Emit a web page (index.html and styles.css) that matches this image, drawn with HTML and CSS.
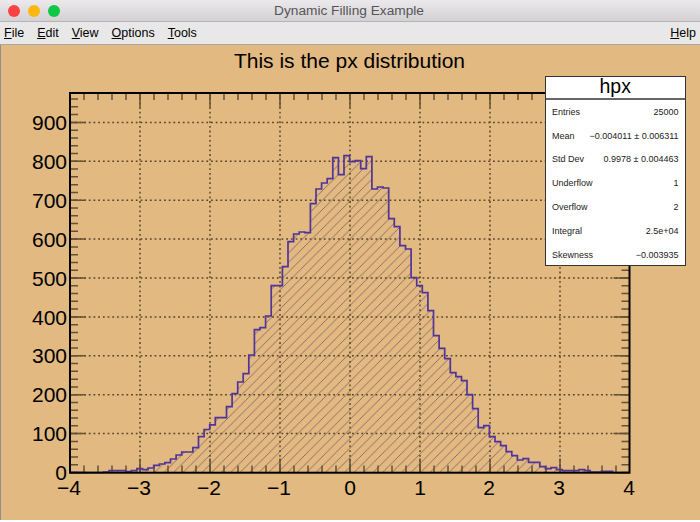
FILE: index.html
```html
<!DOCTYPE html>
<html lang="en">
<head>
<meta charset="utf-8">
<title>Dynamic Filling Example</title>
<link rel="stylesheet" href="styles.css">
</head>
<body>
<div class="window">
  <header class="titlebar">
    <div class="lights"><span class="light red"></span><span class="light yellow"></span><span class="light green"></span></div>
    <div class="wintitle">Dynamic Filling Example</div>
  </header>
  <nav class="menubar">
    <span class="item"><u>F</u>ile</span>
    <span class="item"><u>E</u>dit</span>
    <span class="item"><u>V</u>iew</span>
    <span class="item"><u>O</u>ptions</span>
    <span class="item"><u>T</u>ools</span>
    <span class="item help"><u>H</u>elp</span>
  </nav>
  <main class="canvas">
    <svg class="plot" viewBox="0 45 700 475" width="700" height="475" xmlns="http://www.w3.org/2000/svg">
      <defs>
        <pattern id="hatch" patternUnits="userSpaceOnUse" width="9.5" height="9.5">
          <path class="hatchline" d="M-1 10.5L10.5 -1M-1 1L1 -1M8.5 10.5L10.5 8.5"/>
        </pattern>
      </defs>
      <text class="title" x="349.5" y="68">This is the px distribution</text>
      <path class="histfill" d="M103.4 472.7V472H109V470.7H125.8V471.7H131.3V470.7H136.9V468.7H142.5V469.7H148.1V468H153.7V465.3H159.3V464H164.9V462.7H170.5V459H176.1V455H181.7V452H192.9V447.7H198.5V436.7H204.1V429.5H209.7V424.8H215.3V417.7H226.5V406.7H232.1V393.7H237.7V382H243.2V373.7H248.8V355H254.4V329.7H260V327.7H265.6V316H271.2V285.7H282.4V266.7H288V241.7H293.6V234H299.2V232H304.8V232.7H310.4V203.7H316V189H321.6V183H327.2V178.7H332.8V157.7H338.4V174.7H344V155.7H349.6V161.7H355.1V160.7H360.7V168.7H366.3V156.7H371.9V189H377.5V187H383.1V188H388.7V218.7H394.3V226.7H399.9V245.7H405.5V249H411.1V277.7H416.7V285.7H422.3V292.7H427.9V310.7H433.5V335.7H439.1V348.3H444.7V358.7H450.3V372.7H455.9V376.7H461.5V380.7H467V394.7H472.6V408.7H478.2V427.7H483.8V425.7H489.4V436.7H495V441.7H500.6V445.7H506.2V451.7H511.8V455.7H517.4V460H523V458.7H528.6V462.3H539.8V466.7H545.4V468.7H551V467.7H556.6V469.7H562.2V470.7H579V469.7H584.6V470.7H590.2V472H601.4V471.3H612.6V472.7Z"/>
      <g class="grid">
        <path d="M140 93V472M210 93V472M280 93V472M350 93V472M420 93V472M490 93V472M560 93V472"/>
        <path d="M70 122.4H630M70 161.3H630M70 200.2H630M70 239.1H630M70 278H630M70 316.9H630M70 355.8H630M70 394.7H630M70 433.6H630"/>
      </g>
      <g class="ticks">
        <line class="xminor" x1="69.25" y1="469" x2="630" y2="469"/>
        <line class="xminor" x1="69.25" y1="96.5" x2="630" y2="96.5"/>
        <line class="xmajor" x1="69.25" y1="465.5" x2="630" y2="465.5"/>
        <line class="xmajor" x1="69.25" y1="100" x2="630" y2="100"/>
        <line class="yminor" x1="74" y1="473.25" x2="74" y2="93"/>
        <line class="yminor" x1="625.5" y1="473.25" x2="625.5" y2="93"/>
        <line class="ymajor" x1="78" y1="473.25" x2="78" y2="93"/>
        <line class="ymajor" x1="621.5" y1="473.25" x2="621.5" y2="93"/>
      </g>
      <path class="histline" d="M70 472.5H103.4V472H109V470.7H125.8V471.7H131.3V470.7H136.9V468.7H142.5V469.7H148.1V468H153.7V465.3H159.3V464H164.9V462.7H170.5V459H176.1V455H181.7V452H192.9V447.7H198.5V436.7H204.1V429.5H209.7V424.8H215.3V417.7H226.5V406.7H232.1V393.7H237.7V382H243.2V373.7H248.8V355H254.4V329.7H260V327.7H265.6V316H271.2V285.7H282.4V266.7H288V241.7H293.6V234H299.2V232H304.8V232.7H310.4V203.7H316V189H321.6V183H327.2V178.7H332.8V157.7H338.4V174.7H344V155.7H349.6V161.7H355.1V160.7H360.7V168.7H366.3V156.7H371.9V189H377.5V187H383.1V188H388.7V218.7H394.3V226.7H399.9V245.7H405.5V249H411.1V277.7H416.7V285.7H422.3V292.7H427.9V310.7H433.5V335.7H439.1V348.3H444.7V358.7H450.3V372.7H455.9V376.7H461.5V380.7H467V394.7H472.6V408.7H478.2V427.7H483.8V425.7H489.4V436.7H495V441.7H500.6V445.7H506.2V451.7H511.8V455.7H517.4V460H523V458.7H528.6V462.3H539.8V466.7H545.4V468.7H551V467.7H556.6V469.7H562.2V470.7H579V469.7H584.6V470.7H590.2V472H601.4V471.3H612.6V472.5"/>
      <rect class="frame" x="70" y="93" width="559.5" height="379.7"/>
      <g class="ylabels">
        <text x="67" y="129.5">900</text>
        <text x="67" y="168.5">800</text>
        <text x="67" y="207.5">700</text>
        <text x="67" y="246.5">600</text>
        <text x="67" y="285.5">500</text>
        <text x="67" y="324.5">400</text>
        <text x="67" y="363">300</text>
        <text x="67" y="402">200</text>
        <text x="67" y="441">100</text>
        <text x="67" y="480">0</text>
      </g>
      <g class="xlabels">
        <text x="69" y="494.5">−4</text>
        <text x="139" y="494.5">−3</text>
        <text x="209" y="494.5">−2</text>
        <text x="279" y="494.5">−1</text>
        <text x="350" y="494.5">0</text>
        <text x="420" y="494.5">1</text>
        <text x="489" y="494.5">2</text>
        <text x="559" y="494.5">3</text>
        <text x="629" y="494.5">4</text>
      </g>
    </svg>
    <aside class="stats">
      <div class="statshead">hpx</div>
      <div class="statsbody">
        <div class="row"><span>Entries</span><span>25000</span></div>
        <div class="row"><span>Mean</span><span>−0.004011 ± 0.006311</span></div>
        <div class="row"><span>Std Dev</span><span>0.9978 ± 0.004463</span></div>
        <div class="row"><span>Underflow</span><span>1</span></div>
        <div class="row"><span>Overflow</span><span>2</span></div>
        <div class="row"><span>Integral</span><span>2.5e+04</span></div>
        <div class="row"><span>Skewness</span><span>−0.003935</span></div>
      </div>
    </aside>
  </main>
</div>
</body>
</html>
```

FILE: styles.css
```css
* { box-sizing: border-box; }
html, body { margin: 0; padding: 0; background: #fff; }
body { width: 700px; height: 522px; overflow: hidden; font-family: "Liberation Sans", Arial, sans-serif; }
.window { display: flex; flex-direction: column; width: 700px; height: 520px; }

.titlebar {
  position: relative;
  display: flex;
  align-items: center;
  justify-content: center;
  flex: 0 0 22px;
  background: linear-gradient(#ebe9eb, #d3d1d3);
  border-bottom: 1px solid #b4b4b4;
}
.lights { position: absolute; left: 8px; top: 5px; display: flex; gap: 8px; }
.light { width: 12px; height: 12px; border-radius: 50%; }
.red { background: #fc4144; }
.yellow { background: #fdb80f; }
.green { background: #0fc845; }
.wintitle { font-size: 13.7px; color: #555; margin-left: -2px; }

.menubar {
  display: flex;
  align-items: center;
  flex: 0 0 23px;
  padding: 0 4px;
  gap: 13px;
  font-size: 12.5px;
  color: #000;
  background: #e8e8e8;
  border-bottom: 1px solid #a8a8a8;
}
.help { margin-left: auto; }

.canvas {
  position: relative;
  flex: 1;
  background: #e1b981;
  border-left: 1px solid #8f8f8f;
}
.plot { display: block; margin-left: -1px; }

.title { font-size: 21px; text-anchor: middle; fill: #000; }
.hatchline { stroke: #7d5a64; stroke-width: 0.8; fill: none; }
.histfill { fill: url(#hatch); stroke: none; }
.grid path { fill: none; stroke: #5a4629; stroke-width: 1.5; stroke-dasharray: 1.8 2.9; }
.ticks line { stroke: #665236; }
.xminor { stroke-width: 7; stroke-dasharray: 1.5 12.5; }
.xmajor { stroke-width: 14; stroke-dasharray: 1.5 68.5; }
.yminor { stroke-width: 8; stroke-dasharray: 1.5 6.28; }
.ymajor { stroke-width: 16; stroke-dasharray: 1.5 37.4; }
.histline { fill: none; stroke: #4f349b; stroke-width: 1.7; }
.frame { fill: none; stroke: #000; stroke-width: 2; }
.ylabels text { font-size: 21px; text-anchor: end; fill: #000; }
.xlabels text { font-size: 21px; text-anchor: middle; fill: #000; }

.stats {
  position: absolute;
  left: 544px;
  top: 31px;
  display: flex;
  flex-direction: column;
  width: 140.5px;
  height: 190px;
  background: #fff;
  border: 1.5px solid #333;
}
.statshead {
  flex: 0 0 23px;
  font-size: 19.5px;
  line-height: 19px;
  text-align: center;
  color: #000;
  border-bottom: 2px solid #666;
}
.statsbody { flex: 1; display: flex; flex-direction: column; padding: 0 6px; }
.row { display: flex; flex: 0 0 23.8px; align-items: center; justify-content: space-between; font-size: 9px; color: #222; }
```
